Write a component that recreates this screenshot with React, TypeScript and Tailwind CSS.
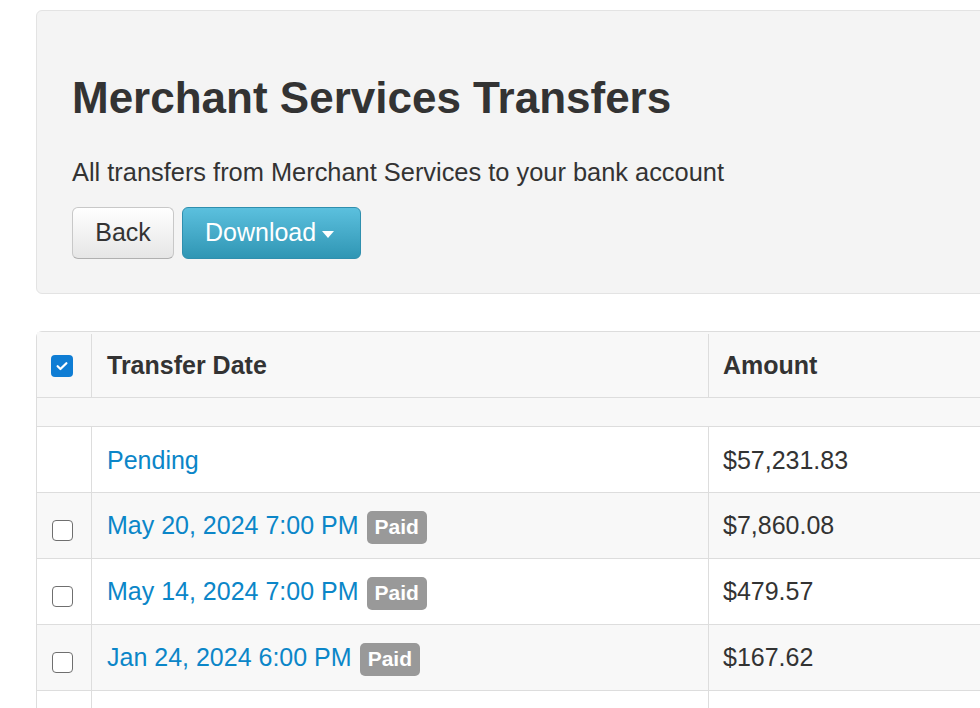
import React from "react";

const rows = [
  { date: "May 20, 2024 7:00 PM", amount: "$7,860.08" },
  { date: "May 14, 2024 7:00 PM", amount: "$479.57" },
  { date: "Jan 24, 2024 6:00 PM", amount: "$167.62" },
];

function CheckedBox() {
  return (
    <span className="flex h-[22px] w-[22px] items-center justify-center rounded-[4px] bg-[#0f7dd4]">
      <svg viewBox="0 0 16 16" className="h-[14px] w-[14px]" fill="none">
        <path d="M3 8.3l3.2 3.1L13 4.8" stroke="white" strokeWidth="2.6" strokeLinecap="round" strokeLinejoin="round" />
      </svg>
    </span>
  );
}

function EmptyBox() {
  return <span className="block h-[21px] w-[21px] rounded-[4px] border-[1.5px] border-[#6f6f6f] bg-white" />;
}

export default function App() {
  return (
    <div
      className="h-[708px] w-[980px] overflow-hidden bg-white text-[#333]"
      style={{ fontFamily: '"Liberation Sans", Arial, Helvetica, sans-serif' }}
    >
      <div className="w-[1100px] pl-[36px] pt-[10px]">
        {/* Hero */}
        <div className="h-[284px] rounded-[6px] border border-[#e3e3e3] bg-[#f4f4f4] pl-[35px] pt-[63px]">
          <h1 className="text-[44px] font-bold leading-[48px] text-[#333]">Merchant Services Transfers</h1>
          <p className="mt-[33px] text-[25.4px] leading-[35px]">
            All transfers from Merchant Services to your bank account
          </p>
          <div className="mt-[17px] flex gap-[8px]">
            <button className="h-[52px] w-[102px] rounded-[6px] border border-[#c8c8c8] border-b-[#b0b0b0] bg-gradient-to-b from-white to-[#e6e6e6] text-[25px] text-[#333]">
              Back
            </button>
            <button className="flex h-[52px] w-[179px] items-center rounded-[6px] border border-[#2f8fae] bg-gradient-to-b from-[#5bc0de] to-[#2f96b4] pl-[22px] text-[25px] text-white">
              Download
              <span className="ml-[6px] mt-[2px] h-0 w-0 border-x-[6.5px] border-t-[7px] border-x-transparent border-t-white" />
            </button>
          </div>
        </div>

        {/* Table */}
        <div className="mt-[37px] rounded-tl-[6px] border-l border-t border-[#dddddd] text-[25px]">
          <div className="flex h-[66px] border-b border-[#dddddd] bg-[#f8f8f8] pt-[2px] font-bold">
            <div className="flex w-[55px] items-center border-r border-[#dddddd] pl-[14px]">
              <CheckedBox />
            </div>
            <div className="flex w-[617px] items-center border-r border-[#dddddd] pl-[15px]">Transfer Date</div>
            <div className="flex flex-1 items-center pl-[14px]">Amount</div>
          </div>
          <div className="h-[29px] border-b border-[#dddddd] bg-[#f8f8f8]" />
          <div className="flex h-[66px] border-b border-[#dddddd] bg-white">
            <div className="w-[55px] border-r border-[#dddddd]" />
            <div className="flex w-[617px] items-center border-r border-[#dddddd] pl-[15px] pt-[3px] text-[#0b86c8]">Pending</div>
            <div className="flex flex-1 items-center pl-[14px] pt-[3px]">$57,231.83</div>
          </div>
          {rows.map((r, i) => (
            <div
              key={r.date}
              className={`flex h-[66px] border-b border-[#dddddd] ${i % 2 === 0 ? "bg-[#f8f8f8]" : "bg-white"}`}
            >
              <div className="flex w-[55px] items-center border-r border-[#dddddd] pl-[15px] pt-[10px]">
                <EmptyBox />
              </div>
              <div className="flex w-[617px] items-center border-r border-[#dddddd] pl-[15px] pt-[1px]">
                <span className="text-[#0b86c8]">{r.date}</span>
                <span className="ml-[8px] mt-[2px] flex h-[33px] items-center rounded-[5px] bg-[#999] px-[8px] text-[21px] font-bold text-white">
                  Paid
                </span>
              </div>
              <div className="flex flex-1 items-center pl-[14px] pt-[1px]">{r.amount}</div>
            </div>
          ))}
          <div className="flex h-[66px]">
            <div className="w-[55px] border-r border-[#dddddd]" />
            <div className="w-[617px] border-r border-[#dddddd]" />
          </div>
        </div>
      </div>
    </div>
  );
}
